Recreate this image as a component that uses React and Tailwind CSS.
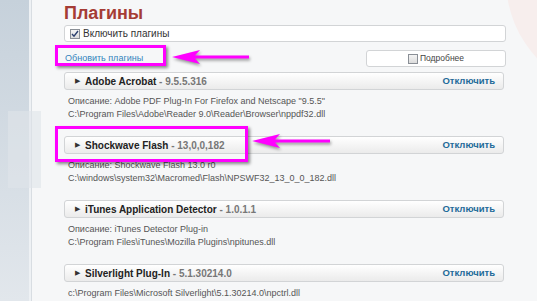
import React from "react";

const plugins = [
  {
    name: "Adobe Acrobat",
    ver: "9.5.5.316",
    desc: 'Описание: Adobe PDF Plug-In For Firefox and Netscape "9.5.5"',
    path: "C:\\Program Files\\Adobe\\Reader 9.0\\Reader\\Browser\\nppdf32.dll",
  },
  {
    name: "Shockwave Flash",
    ver: "13,0,0,182",
    desc: "Описание: Shockwave Flash 13.0 r0",
    path: "C:\\windows\\system32\\Macromed\\Flash\\NPSWF32_13_0_0_182.dll",
  },
  {
    name: "iTunes Application Detector",
    ver: "1.0.1.1",
    desc: "Описание: iTunes Detector Plug-in",
    path: "C:\\Program Files\\iTunes\\Mozilla Plugins\\npitunes.dll",
  },
  {
    name: "Silverlight Plug-In",
    ver: "5.1.30214.0",
    desc: null,
    path: "c:\\Program Files\\Microsoft Silverlight\\5.1.30214.0\\npctrl.dll",
  },
];

function Check({ checked }) {
  return (
    <span className="w-[10px] h-[10px] border border-[#8a8f96] bg-gradient-to-b from-[#f4f4f4] to-[#dcdcdc] flex items-center justify-center shrink-0">
      {checked && (
        <svg width="8" height="8" viewBox="0 0 8 8">
          <path d="M1 4 L3 6.2 L7 1" stroke="#2a3f6e" strokeWidth="1.4" fill="none" />
        </svg>
      )}
    </span>
  );
}

function Plugin({ p }) {
  return (
    <div className="flex flex-col">
      <div className="h-[18px] rounded-[3px] border border-[#d2d4d6] bg-gradient-to-b from-white to-[#ebebeb] flex items-center pl-[10px] pr-[8px]">
        <span className="text-[7px] text-[#333] mr-[5px]">▶</span>
        <span className="font-bold text-[10px] text-[#222]">{p.name}</span>
        <span className="font-bold text-[10px] text-[#777] whitespace-pre"> - {p.ver}</span>
        <span className="ml-auto font-bold text-[9.5px] text-[#1f6b9a]">Отключить</span>
      </div>
      <div className="pl-[4px] pt-[5px] text-[9px] leading-[13px] text-[#555] flex flex-col">
        {p.desc && <span>{p.desc}</span>}
        <span>{p.path}</span>
      </div>
    </div>
  );
}

export default function App() {
  return (
    <div
      className="relative w-[537px] h-[301px] overflow-hidden flex bg-[#f6f7f8]"
      style={{ fontFamily: '"Liberation Sans", Arial, sans-serif' }}
    >
      <div className="absolute left-[506px] top-[-134px] w-[228px] h-[228px] rounded-full bg-[#f7eeed]" />
      <div className="w-[31px] shrink-0 bg-gradient-to-b from-[#c6d1db] to-[#e2e7ec] border-r-2 border-[#eef1f4]" />
      <div className="w-px bg-[#d8dde2]" />
      <div className="absolute left-[8px] top-[111px] w-[33px] h-[77px] bg-[#dfe5ea] opacity-60" />
      <div className="relative flex-1 pl-[32px] pr-[31px] pt-[2px] flex flex-col">
        <h1 className="text-[18px] font-bold text-[#a53c35] leading-[22px]">Плагины</h1>
        <div className="mt-[1px] h-[17px] rounded-[3px] border border-[#d2d4d6] bg-white flex items-center gap-[3px] pl-[5px] text-[10px] text-[#333]">
          <Check checked />
          <span>Включить плагины</span>
        </div>
        <div className="mt-[8px] flex items-center justify-between h-[17px]">
          <span className="text-[9px] text-[#3484bd] pl-[1px]">Обновить плагины</span>
          <div className="w-[140px] h-[17px] rounded-[3px] border border-[#d2d4d6] bg-white flex items-center justify-center gap-[2px] text-[8.5px] text-[#444]">
            <Check />
            <span>Подробнее</span>
          </div>
        </div>
        <div className="mt-[5px] flex flex-col gap-[15px] pr-[2px]">
          {plugins.map((p) => (
            <Plugin key={p.name} p={p} />
          ))}
        </div>
      </div>

      <div className="absolute left-[55px] top-[45px] w-[111px] h-[21px] border-[3px] border-[#ff00ff] shadow-[2px_2px_3px_rgba(0,0,0,0.45)]" />
      <div className="absolute left-[55px] top-[126px] w-[193px] h-[36px] border-[3px] border-[#ff00ff] shadow-[2px_2px_3px_rgba(0,0,0,0.45)]" />
      <svg className="absolute left-0 top-0" width="537" height="301" style={{ filter: "drop-shadow(1px 2px 1.5px rgba(0,0,0,0.4))" }}>
        <path d="M172 57 L200 50 L195 55.5 L249 55.5 L249 58.5 L195 58.5 L200 64 Z" fill="#ff00ff" />
        <path d="M252 141 L280 134 L275 139.5 L330 139.5 L330 142.5 L275 142.5 L280 148 Z" fill="#ff00ff" />
      </svg>
    </div>
  );
}
